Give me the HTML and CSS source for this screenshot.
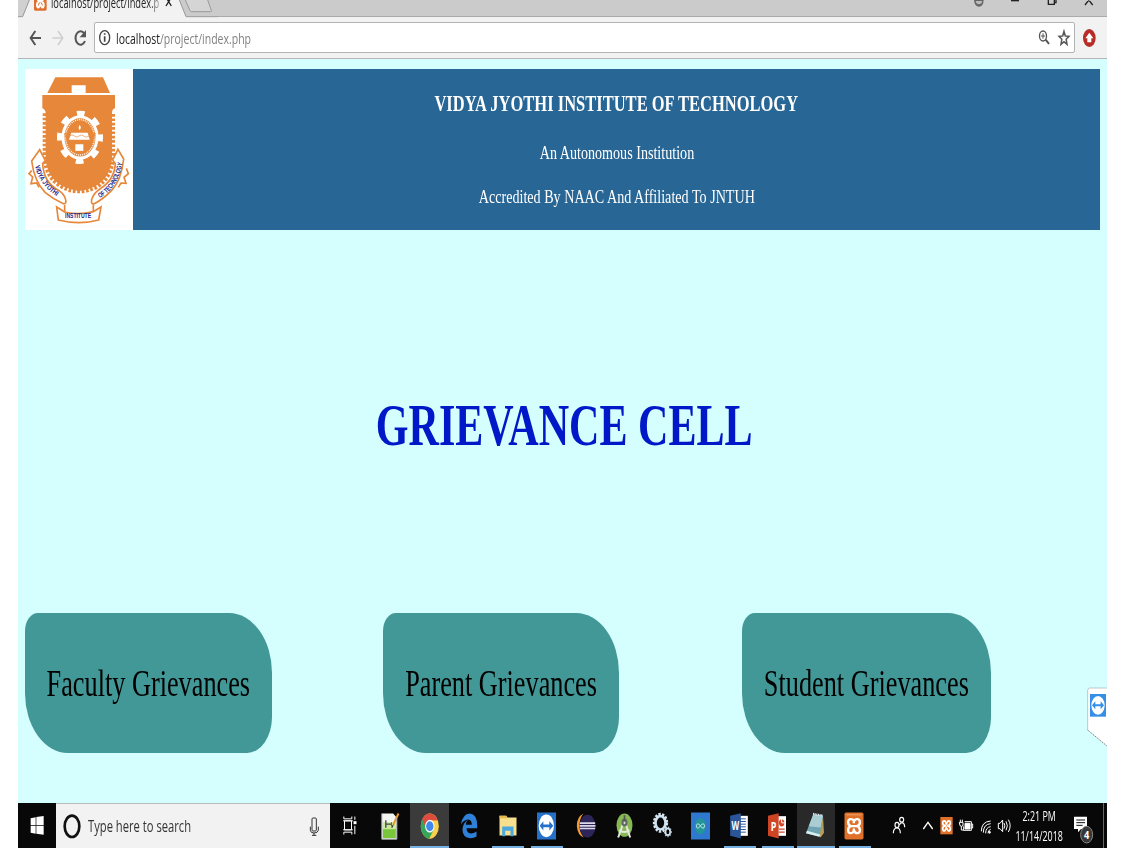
FILE: index.html
```html
<!DOCTYPE html>
<html lang="en">
<head>
<meta charset="utf-8">
<title>Grievance Cell</title>
<link rel="stylesheet" href="styles.css">
</head>
<body>
<div class="desktop">
  <header class="tabstrip">
    <svg class="tabs" viewBox="54 0 600 51">
      <path d="M54 49H68L88 0H538L558 49H654V51H54Z" fill="#f2f2f2"/>
      <path d="M54 0H88L68 49H54Z" fill="#d0d0d0"/>
      <path d="M538 0H654V49H558Z" fill="#cbcbcb"/>
      <path d="M54 50H68L88 0M538 0L558 50H654" fill="none" stroke="#999" stroke-width="3"/>
      <path d="M556 0L570 32Q571 35 575 35H632Q636 35 634 31L623 0" fill="#d5d5d5" stroke="#999" stroke-width="3"/>
      <rect x="102" y="-20" width="38" height="52" rx="4" fill="#e0702f"/>
      <path d="M112-8Q112 3 121 3Q130 3 130-8M121 3Q111 5 111 15Q111 23 116 22L121 13L126 22Q131 23 131 15Q131 5 121 3" fill="none" stroke="#fff" stroke-width="6"/>
      <path d="M498 18L514-8M514 18L498-8" stroke="#222" stroke-width="4"/>
    </svg>
    <span class="tab-title"><span class="squeeze">localhost/project/index.p</span></span>
    <svg class="window-buttons" viewBox="120 0 411 51">
      <path d="M132 0Q134 20 147 20Q160 20 161 0Z" fill="#666"/><path d="M137 3H157Q154 13 147 13Q139 13 137 3Z" fill="#bbb"/>
      <path d="M243 2H267" stroke="#222" stroke-width="4"/>
      <path d="M355 0V13H373V0M373 8H378V0" fill="none" stroke="#222" stroke-width="4"/>
      <path d="M465 15L482-7M488 15L471-7" stroke="#222" stroke-width="4"/>
    </svg>
  </header>

  <div class="toolbar">
    <svg class="nav-icons" viewBox="54 51 231 123" fill="none">
      <path d="M123 114H93M106 93L92 114L106 135" stroke="#555" stroke-width="6"/>
      <path d="M157 114H187M174 93L188 114L174 135" stroke="#d0d0d0" stroke-width="5"/>
      <path d="M253 101A15 20 0 1 0 255 123" stroke="#555" stroke-width="6"/>
      <path d="M258 90V112H239Z" fill="#555"/>
    </svg>
    <div class="urlbar">
      <svg class="info" viewBox="288 70 60 87" fill="none" stroke="#444">
        <ellipse cx="317" cy="114" rx="15" ry="21" stroke-width="4"/>
        <path d="M317 110V126M317 101V105" stroke-width="5"/>
      </svg>
      <span class="url"><span class="squeeze">localhost<span class="path">/project/index.php</span></span></span>
      <svg class="url-actions" viewBox="318 70 114 87" fill="none" stroke="#555">
        <ellipse cx="339" cy="109" rx="10.500" ry="15" stroke-width="4"/>
        <path d="M333 109H345M339 101V117" stroke-width="3"/><path d="M347 120L357 133" stroke-width="6"/>
        <path d="M402 95L406 109L417 110L408.500 119L411 134L402 126L393 134L395.500 119L387 110L398 109Z" stroke-width="4.500"/>
      </svg>
    </div>
    <svg class="extension" viewBox="435 51 96 123">
      <ellipse cx="478" cy="114" rx="19" ry="27" fill="#b72c27"/><path d="M478 98L490 115H484V127H472V115H466Z" fill="#fff"/>
    </svg>
  </div>

  <main class="page">
    <section class="banner">
      <svg class="logo" viewBox="30 27 324 483">
        <path d="M30 27H354V510H30Z" fill="#fff"/>
        <g fill="#e6873a">
          <path d="M121 52H264L285 99H212V76H170V99H97Z"/>
          <path d="M82 105H300V145Q291 147 291 160V295Q287 350 246 376Q218 391 192 393Q166 390 138 376Q96 350 92 295V160Q92 149 82 145Z"/>
        </g>
        <path d="M90 160V295Q95 354 140 379Q165 393 192 393Q220 393 246 379Q288 352 293 295V160" fill="none" stroke="#e6873a" stroke-width="14" stroke-dasharray="8 5"/>
        <g fill="none" stroke="#fff">
          <ellipse cx="195" cy="232" rx="51" ry="62" stroke-width="9"/>
          <ellipse cx="195" cy="232" rx="60" ry="71" stroke-width="18" stroke-dasharray="23 28.500" stroke-dashoffset="11"/>
          <ellipse cx="195" cy="232" rx="43" ry="53" stroke-width="4" stroke-dasharray="3 3"/>
        </g>
        <path d="M151 219A45 57 0 0 0 239 219" fill="none" stroke="#e6873a" stroke-width="7" stroke-dasharray="5 2"/>
        <path d="M169 218H218L224 239H162ZM181 253H205V273H181ZM194 195Q201 203 194 210Q188 204 194 195" fill="#fff"/>
        <path d="M164 228Q171 221 178 228T192 228T206 228T222 228M180 274H209" fill="none" stroke="#e6873a" stroke-width="2"/>
        <g fill="#fff" stroke="#e6873a" stroke-width="5">
          <path d="M50 332L42 341L53 351L48 371L65 369L72 382"/>
          <path d="M334 325L340 341L327 352L333 370L318 369L310 382"/>
          <path d="M74 269L50 303Q58 365 91 398Q115 418 145 431Q155 432 152 419Q148 399 123 386Q86 364 83 311L91 302Z"/>
          <path d="M309 268L326 297Q319 361 290 391Q265 417 238 431Q227 434 230 419Q235 399 256 386Q298 360 301 311L293 300Z"/>
          <path d="M125 441L149 456Q191 466 235 455L258 441L251 480Q192 496 130 480Z"/>
          <path d="M149 434V455M235 434V455"/>
        </g>
        <path id="left-ribbon" d="M60 318Q73 378 132 413" fill="none"/>
        <path id="right-ribbon" d="M254 414Q309 386 324 302" fill="none"/>
        <g class="seal-text">
          <text><textPath href="#left-ribbon" textLength="114" lengthAdjust="spacingAndGlyphs">VIDYA JYOTHI</textPath></text>
          <text><textPath href="#right-ribbon" textLength="130" lengthAdjust="spacingAndGlyphs">OF TECHNOLOGY</textPath></text>
          <text x="150" y="475" textLength="78" lengthAdjust="spacingAndGlyphs">INSTITUTE</text>
        </g>
      </svg>
      <div class="banner-text">
        <h1><span class="squeeze">VIDYA JYOTHI INSTITUTE OF TECHNOLOGY</span></h1>
        <p><span class="squeeze">An Autonomous Institution</span></p>
        <p><span class="squeeze">Accredited By NAAC And Affiliated To JNTUH</span></p>
      </div>
    </section>
    <h2 class="title"><span class="squeeze">GRIEVANCE CELL</span></h2>
    <nav class="cards">
      <a class="card faculty"><span class="squeeze">Faculty Grievances</span></a>
      <a class="card parent"><span class="squeeze">Parent Grievances</span></a>
      <a class="card student"><span class="squeeze">Student Grievances</span></a>
    </nav>
    <svg class="teamviewer-tab" viewBox="1071 261 60 180">
      <path d="M1131 264H1079Q1073 265 1073 272V390L1131 438Z" fill="#fff"/>
      <path d="M1131 264H1079Q1073 265 1073 272V390" fill="none" stroke="#aaa" stroke-width="2"/>
      <path d="M1073 390L1131 438" stroke="#555" stroke-width="2.500" stroke-dasharray="4 3"/>
      <path d="M1080 282H1128V350H1080Z" fill="#358ee8"/><ellipse cx="1104" cy="316" rx="20" ry="28" fill="#fff"/>
      <path d="M1086 316L1096 304V313H1112V304L1122 316L1112 328V319H1096V328Z" fill="#358ee8"/>
    </svg>
  </main>

  <footer class="taskbar">
    <div class="start"><svg viewBox="54 24 114 135"><path d="M92 70L107 67V90H92ZM109 66L131 63V90H109ZM92 92H107V116L92 113ZM109 92H131V119L109 116Z" fill="#fff"/></svg></div>
    <div class="search">
      <svg class="cortana" viewBox="168 24 90 135"><ellipse cx="216" cy="91" rx="22" ry="32" fill="none" stroke="#111" stroke-width="8"/></svg>
      <span class="placeholder"><span class="squeeze">Type here to search</span></span>
      <svg class="mic" viewBox="900 24 90 135" fill="none" stroke="#333" stroke-width="3"><rect x="936" y="66" width="13" height="39" rx="3"/><path d="M931 92V103Q932 111 942 111Q953 111 955 103V92M942 111V119M936 118H949"/></svg>
    </div>
    <div class="apps">
      <div class="app"><svg viewBox="61.500 49.500 60 84" fill="none" stroke="#fff" stroke-width="3"><path d="M70 63V70H94V63M70 117V110H94V117M72 76H93V103H72ZM68 76H97M68 103H97M103 63V73M103 91V116"/><path d="M99 77H108V86H99Z" fill="#fff" stroke="none"/></svg></div>
      <div class="app"><svg viewBox="181.500 49.500 60 84"><path d="M184 54H218L229 67V131H184Z" fill="#f4f6f2"/><path d="M187 92H226V128H187Z" fill="#79c63b"/><path d="M187 80H226V101H187Z" fill="#cbe99d"/><path d="M196 74V97M198 86H213" stroke="#444" stroke-width="4"/><path d="M213 80V93" stroke="#666" stroke-width="3"/><path d="M234 54L218 88" stroke="#e99a27" stroke-width="6"/><path d="M218 88L214 97" stroke="#222" stroke-width="3"/><path d="M184 54V131H229V67" fill="none" stroke="#aaa" stroke-width="3"/></svg></div>
      <div class="app active"><svg viewBox="298.500 49.500 60 84"><ellipse cx="328" cy="92" rx="27" ry="38" fill="#fbd04b"/><path d="M305 71Q295 95 307 115Q315 129 326 130L339 104L328 95Z" fill="#35a65a"/><path d="M305 71L318 101L328 92V74L352 75Q344 54 328 54Q313 54 305 71Z" fill="#dc4b3e"/><ellipse cx="328" cy="92" rx="14" ry="19" fill="#fff"/><ellipse cx="328" cy="92" rx="11" ry="15" fill="#4387ed"/></svg></div>
      <div class="app"><svg viewBox="415.500 49.500 60 84"><path d="M421 88Q426 55 448 54Q470 56 470 91V98H438Q439 114 453 114Q462 113 468 108V123Q460 128 450 128Q426 127 426 103Q427 82 443 73Q435 80 436 88H454Q454 73 443 72Q429 73 421 88Z" fill="#2e80d8"/></svg></div>
      <div class="app open"><svg viewBox="532.500 49.500 60 84"><path d="M537 61H557L561 66H588V120H537Z" fill="#f7df8d"/><path d="M537 61H557L561 68H537Z" fill="#e7b74a"/><path d="M545 93H579V122H570V106H554V122H545Z" fill="#4ba8df"/></svg></div>
      <div class="app open"><svg viewBox="651 49.500 60 84"><path d="M651 51H708V132H651Z" fill="#2470cb"/><ellipse cx="679" cy="91" rx="23" ry="34" fill="#fff"/><path d="M659 91L670 77V87H688V77L700 91L688 105V95H670V105Z" fill="#2470cb"/></svg></div>
      <div class="app"><svg viewBox="769.500 49.500 60 84"><path d="M789 54Q768 65 769 92Q771 119 790 126Q777 111 777 91Q777 68 789 54Z" fill="#f29a35"/><ellipse cx="801" cy="92" rx="24" ry="34" fill="#2d2558"/><path d="M778 83H824M777 91H825M778 99H824" stroke="#dad8e9" stroke-width="5"/></svg></div>
      <div class="app"><svg viewBox="73.500 49.500 60 84"><ellipse cx="102" cy="89" rx="24" ry="35" fill="#86b953"/><path d="M98 84L83 126M105 84L119 126M86 104Q101 115 117 104" fill="none" stroke="#e8e8e2" stroke-width="6"/><ellipse cx="102" cy="81" rx="9" ry="12" fill="#626b60"/><path d="M102 59V83" stroke="#555" stroke-width="5"/><ellipse cx="102" cy="82" rx="3" ry="4" fill="#ddd"/></svg></div>
      <div class="app"><svg viewBox="187.500 49.500 60 84" fill="none"><ellipse cx="210" cy="82" rx="15" ry="20" stroke="#cbe0ef" stroke-width="8"/><ellipse cx="210" cy="82" rx="19" ry="26" stroke="#d8e7f1" stroke-width="8" stroke-dasharray="7 4"/><ellipse cx="232" cy="109" rx="7" ry="10" stroke="#d8e7f1" stroke-width="5"/><ellipse cx="232" cy="109" rx="10" ry="14" stroke="#b5cbd9" stroke-width="4" stroke-dasharray="4 4"/></svg></div>
      <div class="app"><svg viewBox="303 49.500 60 84"><path d="M303 51H360V132H303Z" fill="#2e78cf"/><ellipse cx="331" cy="92" rx="16" ry="24" fill="#259697"/><path d="M331 91Q326 83 322 85Q315 91 322 98Q326 100 331 91Q337 83 341 85Q347 91 341 98Q336 100 331 91Z" fill="none" stroke="#d5eeee" stroke-width="2.500"/></svg></div>
      <div class="app open"><svg viewBox="418.500 49.500 60 84"><path d="M447 61H472V121H447Z" fill="#fff"/><path d="M449 70H466M449 78H466M449 86H466M449 94H466M449 102H466M449 110H466" stroke="#31599c" stroke-width="3"/><path d="M419 61L451 53V129L419 121Z" fill="#2a5699"/><text class="office" x="423" y="104" textLength="23" lengthAdjust="spacingAndGlyphs">W</text></svg></div>
      <div class="app open"><svg viewBox="534 49.500 60 84"><path d="M563 62H588V121H563Z" fill="#fff"/><path d="M567 101H584M567 110H584" stroke="#d04727" stroke-width="4"/><ellipse cx="575" cy="82" rx="8" ry="11" fill="#d04727"/><path d="M575 69V82H585" fill="none" stroke="#fff" stroke-width="3"/><path d="M534 61L566 53V129L534 121Z" fill="#ce4526"/><text class="office" x="542" y="105" textLength="17" lengthAdjust="spacingAndGlyphs">P</text></svg></div>
      <div class="app active dim"><svg viewBox="648 49.500 60 84"><path d="M699 62L702 112L692 126L686 121Z" fill="#b59d5c"/><path d="M670 56L699 61L688 124L648 113Z" fill="#6fa5b3"/><path d="M670 56L699 61L692 96L656 92Z" fill="#a9cdd3"/><path d="M648 113L688 124L691 117L651 106Z" fill="#d9eff0"/><path d="M669 55L699 60" stroke="#e6eeee" stroke-width="6" stroke-dasharray="3 2"/></svg></div>
      <div class="app open"><svg viewBox="763.500 49.500 60 84"><rect x="762" y="51" width="57" height="81" rx="5" fill="#df712b"/><path d="M768 58H813" stroke="#f3a467" stroke-width="3"/><path d="M790 83V76Q787 70 779 71Q772 73 773 82Q774 91 783 92H798Q807 91 808 82Q809 73 802 71Q793 70 791 78M783 92Q774 93 773 102Q772 112 779 113Q787 114 790 105V99M798 92Q807 93 808 102Q809 112 802 113Q793 114 791 105" fill="none" stroke="#fff" stroke-width="7"/></svg></div>
    </div>
    <div class="tray">
      <svg viewBox="12 24 117 135" fill="none" stroke="#fff" stroke-width="3.500"><ellipse cx="95" cy="74" rx="6" ry="7"/><ellipse cx="81" cy="90" rx="6" ry="8"/><path d="M70 115Q70 99 81 99Q91 99 91 115M88 90Q91 83 96 83Q104 84 104 97"/></svg>
      <svg viewBox="129 24 72 135"><path d="M160 102L174 82L188 102" fill="none" stroke="#fff" stroke-width="4"/></svg>
      <svg viewBox="201 24 60 135"><path d="M211 66H248V118H211Z" fill="#df712b"/><path d="M228 92Q218 92 218 84Q218 76 225 78L229 87L234 78Q241 76 241 84Q241 92 231 92Q241 93 241 101Q241 109 234 107L229 98L225 107Q218 109 218 101Q218 93 228 92Z" fill="none" stroke="#fff" stroke-width="5"/></svg>
      <svg viewBox="261 24 60 135" fill="none" stroke="#fff" stroke-width="3"><path d="M268 82H279V90Q279 94 274 94Q269 94 269 87ZM271 74V82M277 74V82M274 94V105H282M284 80H304V106H281V94M304 87H308V99H304"/><path d="M285 85H300V102H285Z" fill="#fff"/></svg>
      <svg viewBox="321 24 57 135" fill="none" stroke="#fff" stroke-width="3"><path d="M334 109Q334 80 362 78M340 113Q340 88 362 86M347 115Q347 97 362 95M354 115Q354 105 362 103" /><ellipse cx="359" cy="112" rx="2" ry="3" fill="#fff"/></svg>
      <svg viewBox="378 24 51 135" fill="none" stroke="#fff" stroke-width="3"><path d="M385 85H390L398 75V110L390 101H385ZM402 84Q407 92 402 101M408 79Q416 92 408 106M415 74Q426 92 415 111"/></svg>
      <div class="clock"><span class="squeeze">2:21 PM</span><span class="squeeze date">11/14/2018</span></div>
      <svg viewBox="588 24 111 135"><path d="M612 65H651V102H633L624 112V102H612Z" fill="#fff"/><path d="M619 75H645M619 83H645M619 91H638" stroke="#111" stroke-width="3"/><ellipse cx="650" cy="119" rx="18" ry="25" fill="#373737" stroke="#888" stroke-width="3"/><text class="count" x="642" y="131" textLength="16" lengthAdjust="spacingAndGlyphs">4</text></svg>
      <span class="show-desktop"></span>
    </div>
  </footer>
</div>
</body>
</html>
```
FILE: styles.css
```css
* { box-sizing: border-box; }
body { margin: 0; background: #fff; font-family: "Open Sans", sans-serif; overflow: hidden; }
svg { display: block; flex: none; overflow: visible; }
.desktop { width: 1089px; height: 848px; margin-left: 18px; display: flex; flex-direction: column; overflow: hidden; }
.squeeze { display: inline-block; flex: none; white-space: nowrap; transform: scaleX(.7); }

.tabstrip { display: flex; height: 17px; flex: none; background: #cbcbcb; border-bottom: 1px solid #aaa; position: relative; }
.tabs { width: 200px; height: 17px; }
.tab-title { position: absolute; left: 33px; top: -7px; font-size: 14px; line-height: 20px; color: #222; -webkit-mask-image: linear-gradient(90deg, #000 60%, rgba(0, 0, 0, .2) 68%); }
.tab-title .squeeze { transform-origin: left; transform: scaleX(.665); }
.window-buttons { width: 137px; height: 17px; margin-left: auto; }

.toolbar { display: flex; align-items: center; height: 42px; flex: none; background: #f2f2f2; border-bottom: 1px solid #b5b5b5; }
.nav-icons { width: 77px; height: 41px; margin-right: -1px; }
.urlbar { display: flex; align-items: center; width: 981px; height: 31px; background: #fff; border: 1px solid #b4b4b4; border-radius: 2px; }
.info { width: 20px; height: 29px; }
.url { width: 900px; padding-left: 1px; font-size: 15px; line-height: 24px; color: #222; }
.url .squeeze { transform-origin: left; }
.path { color: #808080; }
.url-actions { width: 38px; height: 29px; margin-left: auto; }
.extension { width: 32px; height: 41px; }

.page { position: relative; height: 744px; flex: none; padding: 10px 7px 0; background: #d5ffff; font-family: "Liberation Serif", serif; }
.banner { display: flex; height: 161px; background: #286695; color: #fff; }
.logo { width: 108px; height: 161px; }
.seal-text { font: bold 21px "Liberation Sans", sans-serif; fill: #20258d; }
.banner-text { flex: 1; display: flex; flex-direction: column; align-items: center; padding-top: 21px; }
.banner-text h1 { margin: 0; font-size: 23px; line-height: 28px; }
.banner-text h1 .squeeze { transform: scaleX(.718); }
.banner-text p { margin: 0; font-size: 19px; line-height: 24px; }
.banner-text p .squeeze { transform: scaleX(.743); }
.banner-text h1 + p { margin: 23px 0 20px; }
.title { display: flex; justify-content: center; margin: 160px 0 0; padding-left: 3px; height: 70px; font-size: 59px; line-height: 70px; color: #0018c8; }
.title .squeeze { transform: scaleX(.713); }
.cards { display: flex; margin-top: 153px; }
.card { display: flex; align-items: center; justify-content: center; height: 140px; background: #429797; color: #000; font-size: 37px; border-radius: 13px 43px 25px 43px / 18px 60px 36px 60px; }
.card .squeeze { transform: scaleX(.71); }
.faculty { width: 247px; margin-right: 111px; }
.parent { width: 236px; margin-right: 123px; }
.student { width: 249px; }
.teamviewer-tab { position: absolute; right: 0; top: 628px; width: 20px; height: 60px; }

.taskbar { display: flex; height: 45px; flex: none; background: #080808; color: #fff; }
.start { width: 38px; }
.start svg { width: 38px; height: 45px; }
.search { display: flex; align-items: center; width: 274px; background: #f2f2f2; border-top: 1px solid #bbb; color: #333; font-size: 16px; }
.cortana, .mic { width: 30px; height: 45px; }
.placeholder { width: 214px; padding-left: 2px; }
.placeholder .squeeze { transform-origin: left; }
.apps { display: grid; grid-template-columns: 41px 39px 39px 39px 39px 40px 39px 37px 39px 38px 39px 38px 38px 39px; }
.app { display: flex; align-items: center; justify-content: center; height: 45px; }
.app svg { width: 20px; height: 28px; }
.open { background: linear-gradient(#76b0e0, #76b0e0) center bottom / 32px 2px no-repeat; }
.active { background: linear-gradient(#76b0e0, #76b0e0) center bottom / 100% 2px no-repeat #3b3b3b; }
.dim { background-color: #292929; }
.office { font: bold 36px "Open Sans", sans-serif; fill: #fff; }
.tray { display: grid; grid-template-columns: 39px 24px 20px 20px 19px 17px 53px 37px 4px; }
.tray svg { width: 100%; height: 45px; }
.clock { display: flex; flex-direction: column; align-items: center; justify-content: center; font-size: 14px; line-height: 20px; }
.clock .squeeze { transform: scaleX(.64); }
.count { font: bold 32px "Open Sans", sans-serif; fill: #fff; }
.show-desktop { border-left: 1px solid #666; }
```
